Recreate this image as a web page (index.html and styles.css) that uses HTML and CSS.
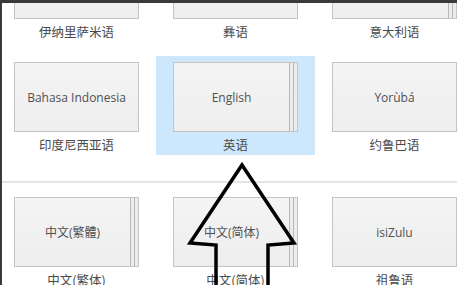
FILE: index.html
```html
<!DOCTYPE html>
<html>
<head>
<meta charset="utf-8">
<link rel="stylesheet" href="styles.css">
</head>
<body>
<div class="page">
  <div class="group first">
    <div class="row">
      <div class="cell">
        <div class="tile"><div class="front"></div></div>
        <div class="label">伊纳里萨米语</div>
      </div>
      <div class="cell">
        <div class="tile"><div class="front"></div></div>
        <div class="label">彝语</div>
      </div>
      <div class="cell">
        <div class="tile"><div class="front"></div><div class="layer"></div><div class="layer last"></div></div>
        <div class="label">意大利语</div>
      </div>
    </div>
    <div class="row">
      <div class="cell">
        <div class="tile"><div class="front">Bahasa Indonesia</div></div>
        <div class="label">印度尼西亚语</div>
      </div>
      <div class="cell selected">
        <div class="tile"><div class="front">English</div><div class="layer"></div><div class="layer last"></div></div>
        <div class="label">英语</div>
      </div>
      <div class="cell">
        <div class="tile"><div class="front">Yorùbá</div></div>
        <div class="label">约鲁巴语</div>
      </div>
    </div>
  </div>
  <div class="divider"></div>
  <div class="group">
    <div class="row">
      <div class="cell">
        <div class="tile"><div class="front">中文(繁體)</div><div class="layer"></div><div class="layer last"></div></div>
        <div class="label">中文(繁体)</div>
      </div>
      <div class="cell">
        <div class="tile"><div class="front">中文(简体)</div><div class="layer"></div><div class="layer last"></div></div>
        <div class="label">中文(简体)</div>
      </div>
      <div class="cell">
        <div class="tile"><div class="front">isiZulu</div></div>
        <div class="label">祖鲁语</div>
      </div>
    </div>
  </div>
  <svg class="arrow" width="457" height="285" viewBox="0 0 457 285">
    <polygon points="242,165 294,243 268,245 268,292 216,292 216,245 190,243" fill="none" stroke="#000" stroke-width="3.5" stroke-linejoin="miter"/>
  </svg>
</div>
</body>
</html>
```
FILE: styles.css
```css
html, body {
  margin: 0;
  padding: 0;
  background: #ffffff;
}
.page {
  position: relative;
  width: 455px;
  height: 282px;
  overflow: hidden;
  background: #ffffff;
  border-top: 3px solid #3a3a3a;
  border-left: 2px solid #3a3a3a;
  font-family: "Open Sans", "Noto Sans CJK SC", sans-serif;
  color: #4a4a4a;
}
.group.first {
  margin-top: -60px;
}
.row {
  display: flex;
  margin-left: -5px;
  margin-bottom: 14px;
}
.group .row:last-child {
  margin-bottom: 0;
}
.cell {
  width: 125px;
  flex: none;
  padding: 6px 17px 0 17px;
  height: 93px;
}
.cell.selected {
  background: #cde8fc;
}
.tile {
  height: 68px;
  border: 1px solid #c4c4c4;
  background: linear-gradient(#f4f4f4, #eeeeee);
  display: flex;
}
.front {
  flex: 1;
  display: flex;
  align-items: center;
  justify-content: center;
  font-size: 12px;
  color: #505050;
  font-family: "Open Sans", "Noto Sans CJK SC", sans-serif;
}
.layer {
  width: 3px;
  border-left: 1px solid #b8b8b8;
  background: #ececec;
}
.label {
  height: 23px;
  display: flex;
  align-items: center;
  justify-content: center;
  font-size: 12.5px;
  color: #4a4a4a;
  font-family: "Noto Sans CJK SC", sans-serif;
  padding-top: 1px;
}
.divider {
  height: 2px;
  background: #e4e4ea;
  margin-top: 26px;
  margin-bottom: 8px;
}
.arrow {
  position: absolute;
  left: -2px;
  top: -3px;
}
```
